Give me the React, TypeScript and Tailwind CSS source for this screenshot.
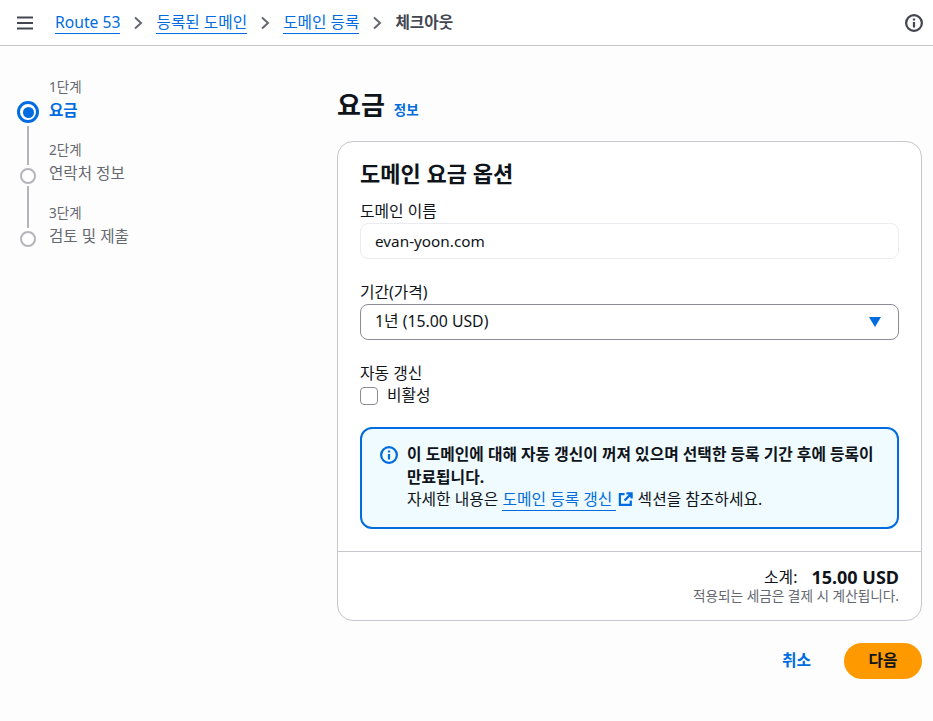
const Chevron = () => (
  <svg viewBox="0 0 16 16" className="w-[16px] h-[16px] mx-[10px] mt-[2px] shrink-0" fill="none" stroke="#656871" strokeWidth="2">
    <path d="M5 2.5 11 8l-6 5.5" />
  </svg>
)

const Crumb = ({ children }: { children: string }) => (
  <a className="text-[#006ce0] border-b border-[#006ce0] leading-[22px]">{children}</a>
)

const steps = [
  { step: "1단계", label: "요금", active: true },
  { step: "2단계", label: "연락처 정보", active: false },
  { step: "3단계", label: "검토 및 제출", active: false },
]

export default function App() {
  return (
    <div className="min-h-[721px] bg-[#fdfdfd] text-[15.8px] text-[#0f141a] font-['Noto_Sans','Noto_Sans_CJK_KR',sans-serif]">
      <header className="h-[46px] bg-white border-b border-[#c6c6cd] flex items-center pl-[17px] pr-[10px]">
        <svg viewBox="0 0 16 16" className="w-[16px] h-[16px] mr-[22px]" fill="none" stroke="#424650" strokeWidth="2">
          <path d="M0 2.5h16M0 8h16M0 13.5h16" />
        </svg>
        <nav className="flex items-center flex-1 text-[15.7px]">
          <Crumb>Route 53</Crumb>
          <Chevron />
          <Crumb>등록된 도메인</Crumb>
          <Chevron />
          <Crumb>도메인 등록</Crumb>
          <Chevron />
          <span className="text-[#424650] font-semibold">체크아웃</span>
        </nav>
        <svg viewBox="0 0 16 16" className="w-[18px] h-[18px]" fill="none" stroke="#424650" strokeWidth="2">
          <circle cx="8" cy="8" r="7" />
          <path d="M8 7v5M8 4v1.8" />
        </svg>
      </header>

      <main className="flex pl-[18px] pr-[11px]">
        <ol className="w-[319px] shrink-0 pt-[32px]">
          {steps.map((s, i) => (
            <li key={s.step} className="flex h-[63px]">
              <div className="w-[20px] mr-[11px] shrink-0 flex flex-col items-center">
                {s.active ? (
                  <>
                    <div className="w-[22px] h-[22px] mt-[23px] rounded-full border-[3px] border-[#006ce0] bg-white flex items-center justify-center shrink-0">
                      <div className="w-[11px] h-[11px] rounded-full bg-[#006ce0]" />
                    </div>
                    <div className="w-[2px] flex-1 bg-[#b4b4bb] mt-[3px]" />
                  </>
                ) : (
                  <>
                    <div className="h-[24px] w-[2px] bg-[#b4b4bb] mb-[3px]" />
                    <div className="w-[16px] h-[16px] rounded-full border-[2px] border-[#b4b4bb] bg-white shrink-0" />
                    {i === 1 && <div className="w-[2px] flex-1 bg-[#b4b4bb] mt-[2px]" />}
                  </>
                )}
              </div>
              <div>
                <div className="text-[13.5px] leading-[18px] text-[#656871]">{s.step}</div>
                <div className={"text-[15.6px] leading-[22px] mt-[3px] " + (s.active ? "font-bold text-[#006ce0]" : "text-[#656871]")}>
                  {s.label}
                </div>
              </div>
            </li>
          ))}
        </ol>

        <div className="flex-1 min-w-0">
          <div className="flex items-baseline gap-[9px] pt-[39px] pb-[16px]">
            <h1 className="text-[26px] leading-[40px] font-bold">요금</h1>
            <a className="text-[13.5px] font-bold text-[#006ce0]">정보</a>
          </div>

          <section className="bg-white border border-[#c6c6cd] rounded-[16px]">
            <div className="px-[22px] pt-[16px] pb-[22px]">
              <h2 className="text-[22px] leading-[30px] font-bold">도메인 요금 옵션</h2>

              <label className="block leading-[22px] mt-[12px] mb-[1px]">도메인 이름</label>
              <div className="h-[36px] px-[14px] text-[15.3px] border border-[#ebebf0] rounded-[8px] flex items-center">evan-yoon.com</div>

              <label className="block leading-[22px] mt-[22px] mb-[1px]">기간(가격)</label>
              <div className="h-[36px] pl-[14px] pr-[17px] border border-[#8c8c94] rounded-[8px] flex items-center justify-between">
                <span>1년 (15.00 USD)</span>
                <svg viewBox="0 0 12 10" className="w-[12px] h-[10px]" fill="#006ce0">
                  <path d="M0 0h12L6 10z" />
                </svg>
              </div>

              <label className="block leading-[22px] mt-[22px]">자동 갱신</label>
              <div className="flex items-center gap-[9px]">
                <div className="w-[18px] h-[18px] mt-[2px] border border-[#8c8c94] rounded-[4px] bg-white" />
                <span className="leading-[22px]">비활성</span>
              </div>

              <div className="mt-[21px] border-[2px] border-[#006ce0] rounded-[12px] bg-[#f0fbff] pl-[18px] pr-[20px] pt-[14px] pb-[17px] flex gap-[9px]">
                <svg viewBox="0 0 16 16" className="w-[18px] h-[18px] mt-[3px] shrink-0" fill="none" stroke="#006ce0" strokeWidth="2">
                  <circle cx="8" cy="8" r="7" />
                  <path d="M8 7v5M8 4v1.8" />
                </svg>
                <div>
                  <p className="font-bold leading-[23px]">이 도메인에 대해 자동 갱신이 꺼져 있으며 선택한 등록 기간 후에 등록이 만료됩니다.</p>
                  <p className="leading-[21px]">
                    자세한 내용은{" "}
                    <a className="text-[#006ce0] border-b border-[#006ce0]">도메인 등록 갱신 </a>
                    <svg viewBox="0 0 16 16" className="inline-block w-[15px] h-[15px] ml-[2px] align-[-2px]" fill="none" stroke="#006ce0" strokeWidth="2.4">
                      <path d="M7 2.2H2v11.6h11.6V9M9 1.5h5.5V7M14.5 1.5 7 9" />
                    </svg>{" "}
                    섹션을 참조하세요.
                  </p>
                </div>
              </div>
            </div>

            <div className="border-t border-[#c6c6cd] px-[22px] pt-[14px] pb-[17px] text-right">
              <div className="flex items-center justify-end gap-[14px] h-[22px] leading-[22px]">
                <span>소계:</span>
                <span className="text-[18px] font-bold">15.00 USD</span>
              </div>
              <div className="text-[13.65px] leading-[15px] text-[#656871]">적용되는 세금은 결제 시 계산됩니다.</div>
            </div>
          </section>

          <div className="flex items-center justify-end gap-[33px] mt-[22px]">
            <a className="font-bold text-[#006ce0]">취소</a>
            <button className="w-[78px] h-[36px] rounded-full bg-[#ff9900] font-bold text-[#0f141a]">다음</button>
          </div>
        </div>
      </main>
    </div>
  )
}
